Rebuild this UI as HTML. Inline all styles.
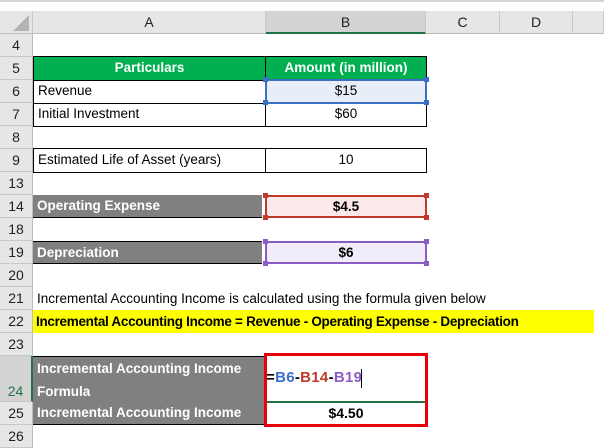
<!DOCTYPE html>
<html><head><style>
body{margin:0;width:604px;height:448px;overflow:hidden;background:#fff;font-family:"Liberation Sans",sans-serif;position:relative}
div{position:absolute;box-sizing:border-box}
.rh{left:0;width:33px;background:#e6e6e6;border-bottom:1px solid #c8c8c8;border-right:1px solid #bdbdbd;text-align:center;font-size:14px;color:#222}
.ch{top:11px;height:23px;background:#e6e6e6;border-right:1px solid #c8c8c8;border-bottom:1px solid #bdbdbd;text-align:center;font-size:14px;line-height:22px;color:#222}
.t{font-size:13.5px;line-height:22px;white-space:nowrap;color:#000}
.b{font-weight:bold}
.g{background:#808080;color:#fff}
</style></head><body>
<div style="left:0;top:0;width:604px;height:2px;background:#d4d4d4"></div>
<div class="ch" style="left:0;width:33px;background:#e6e6e6"><svg width="20" height="20" style="position:absolute;left:10px;top:1px"><polygon points="19,3 19,19 3,19" fill="#b4b4b4"/></svg></div>
<div class="ch" style="left:33px;width:233px">A</div>
<div class="ch" style="left:266px;width:160px;background:#d3d3d3;border-bottom:2px solid #217346">B</div>
<div class="ch" style="left:426px;width:74px">C</div>
<div class="ch" style="left:500px;width:73px">D</div>
<div class="ch" style="left:573px;width:31px"></div>

<div class="rh" style="top:34px;height:23px;line-height:23px">4</div>
<div class="rh" style="top:57px;height:23px;line-height:23px">5</div>
<div class="rh" style="top:80px;height:23px;line-height:23px">6</div>
<div class="rh" style="top:103px;height:23px;line-height:23px">7</div>
<div class="rh" style="top:126px;height:23px;line-height:23px">8</div>
<div class="rh" style="top:149px;height:23px;line-height:23px">9</div>
<div class="rh" style="top:172px;height:23px;line-height:23px">13</div>
<div class="rh" style="top:195px;height:23px;line-height:23px">14</div>
<div class="rh" style="top:218px;height:23px;line-height:23px">18</div>
<div class="rh" style="top:241px;height:23px;line-height:23px">19</div>
<div class="rh" style="top:264px;height:23px;line-height:23px">20</div>
<div class="rh" style="top:287px;height:23px;line-height:23px">21</div>
<div class="rh" style="top:310px;height:23px;line-height:23px">22</div>
<div class="rh" style="top:333px;height:23px;line-height:23px">23</div>
<div class="rh" style="top:356px;height:46px;line-height:70px;background:#d3d3d3;color:#217346;border-right:2px solid #217346">24</div>
<div class="rh" style="top:402px;height:23px;line-height:23px">25</div>
<div class="rh" style="top:425px;height:23px;line-height:23px">26</div>

<div class="t b" style="left:33px;top:56px;width:233px;height:25px;background:#00b050;color:#fff;text-align:center;border:1px solid #000;line-height:22px">Particulars</div>
<div class="t b" style="left:265px;top:56px;width:162px;height:25px;background:#00b050;color:#fff;text-align:center;border:1px solid #000;line-height:22px">Amount (in million)</div>
<div class="t" style="left:33px;top:80px;width:233px;height:24px;border:1px solid #000;border-top:none;padding-left:4px">Revenue</div>
<div style="left:265px;top:79px;width:162px;height:25px;border:2px solid #3a6fc4;background:#e8eef8"></div>
<div class="t" style="left:265px;top:80px;width:162px;height:24px;text-align:center">$15</div>
<div class="t" style="left:33px;top:103px;width:233px;height:24px;border:1px solid #000;border-top:none;padding-left:4px">Initial Investment</div>
<div class="t" style="left:265px;top:103px;width:162px;height:24px;border:1px solid #000;border-top:none;text-align:center">$60</div>
<div class="t" style="left:33px;top:148px;width:233px;height:25px;border:1px solid #000;padding-left:4px">Estimated Life of Asset (years)</div>
<div class="t" style="left:265px;top:148px;width:162px;height:25px;border:1px solid #000;text-align:center">10</div>
<div style="left:265px;top:102px;width:162px;height:2px;background:#3a6fc4"></div>
<div style="left:263px;top:77px;width:5px;height:5px;background:#3a6fc4"></div>
<div style="left:424px;top:77px;width:5px;height:5px;background:#3a6fc4"></div>
<div style="left:263px;top:100px;width:5px;height:5px;background:#3a6fc4"></div>
<div style="left:424px;top:100px;width:5px;height:5px;background:#3a6fc4"></div>

<div class="t b g" style="left:33px;top:195px;width:229px;height:23px;padding-left:4px;border-bottom:1px solid #000">Operating Expense</div>
<div class="t b" style="left:265px;top:195px;width:162px;height:23px;border:2px solid #c0392b;background:#fbe9e9;text-align:center;line-height:19px">$4.5</div>
<div style="left:263px;top:193px;width:5px;height:5px;background:#c0392b"></div>
<div style="left:424px;top:193px;width:5px;height:5px;background:#c0392b"></div>
<div style="left:263px;top:215px;width:5px;height:5px;background:#c0392b"></div>
<div style="left:424px;top:215px;width:5px;height:5px;background:#c0392b"></div>

<div class="t b g" style="left:33px;top:241px;width:229px;height:23px;padding-left:4px;border-top:1px solid #000;border-bottom:1px solid #000">Depreciation</div>
<div class="t b" style="left:265px;top:241px;width:162px;height:23px;border:2px solid #8a5cc4;background:#f1ecf9;text-align:center;line-height:19px">$6</div>
<div style="left:263px;top:239px;width:5px;height:5px;background:#8a5cc4"></div>
<div style="left:424px;top:239px;width:5px;height:5px;background:#8a5cc4"></div>
<div style="left:263px;top:261px;width:5px;height:5px;background:#8a5cc4"></div>
<div style="left:424px;top:261px;width:5px;height:5px;background:#8a5cc4"></div>

<div class="t" style="left:37px;top:287px;height:23px;line-height:23px">Incremental Accounting Income is calculated using the formula given below</div>
<div class="t b" style="left:33px;top:310px;width:561px;height:23px;background:#ffff00;padding-left:3px;line-height:23px;letter-spacing:-0.3px">Incremental Accounting Income = Revenue - Operating Expense - Depreciation</div>

<div class="t b g" style="left:33px;top:356px;width:233px;height:47px;padding-left:4px;border-top:1px solid #000;border-bottom:1px solid #000;line-height:23px">Incremental Accounting Income<br>Formula</div>
<div class="t b g" style="left:33px;top:402px;width:233px;height:23px;padding-left:4px;border-bottom:1px solid #000;line-height:22px">Incremental Accounting Income</div>
<div class="t b" style="left:266px;top:367px;line-height:22px;font-size:15px;letter-spacing:0.3px">=<span style="color:#3a6fc4">B6</span>-<span style="color:#c0392b">B14</span>-<span style="color:#8a5cc4">B19</span></div>
<div style="left:361px;top:369px;width:1px;height:19px;background:#000"></div>
<div class="t b" style="left:266px;top:402px;width:160px;height:23px;text-align:center;line-height:22px;font-size:14px">$4.50</div>
<div style="left:266px;top:401px;width:160px;height:2px;background:#217346"></div>
<div style="left:264px;top:353px;width:164px;height:74px;border:3px solid #e8000b"></div>
</body></html>
